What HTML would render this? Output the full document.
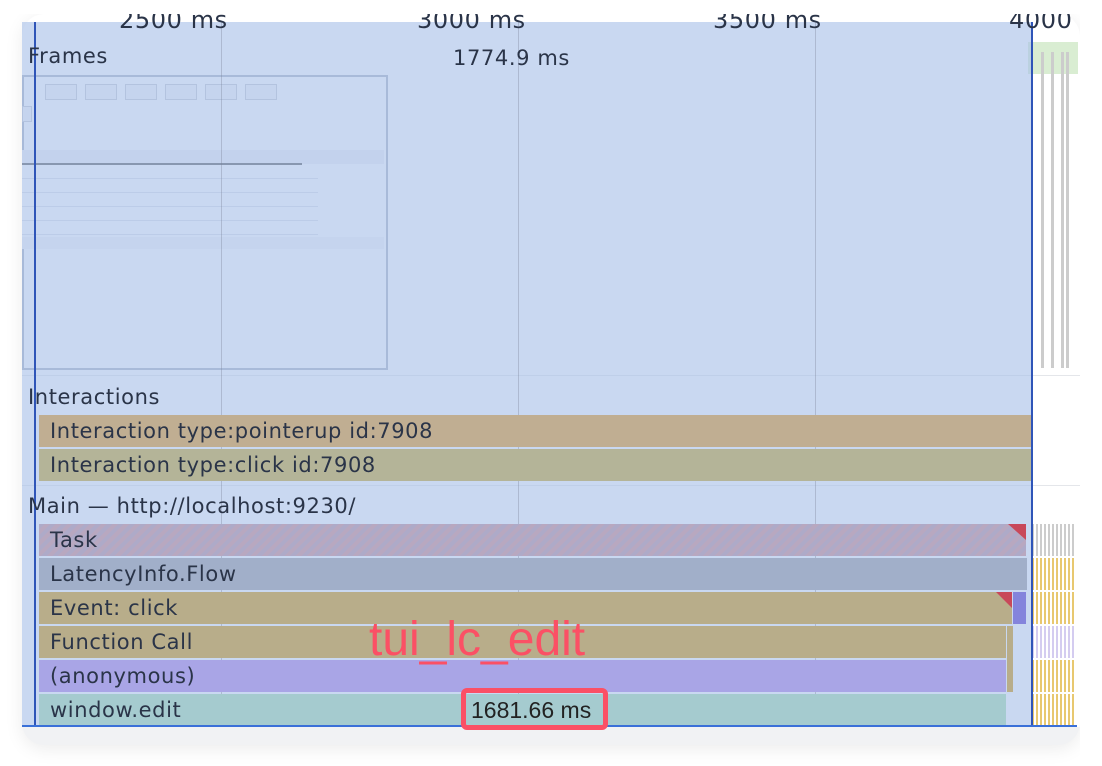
<!DOCTYPE html>
<html><head><meta charset="utf-8"><style>
*{margin:0;padding:0;box-sizing:border-box}
body{width:1102px;height:766px;background:#fff;position:relative;overflow:hidden;font-family:"DejaVu Sans","Noto Sans CJK SC",sans-serif;color:#2a3448}
.card{position:absolute;left:22px;top:14px;width:1058px;height:731px;border-radius:22px;background:#f1f2f4;box-shadow:0 4px 18px rgba(0,0,0,.08);overflow:hidden}
.inner{position:absolute;left:0;top:0;width:1058px;height:713px;background:#fff}
.a{position:absolute}
.t{position:absolute;font-size:21px;letter-spacing:.6px;white-space:nowrap}
.bar{position:absolute;height:32px;font-size:21px;letter-spacing:.6px;line-height:32px;padding-left:11px;white-space:nowrap}
.v{position:absolute;top:22px;width:1px;height:704px;background:rgba(120,130,150,.35)}
.btn{position:absolute;top:84px;width:32px;height:16px;border:1px solid #c4c8d0;background:#f4f5f7}
</style></head><body>
<div class="card"><div class="inner"></div></div>
<div class="a" style="left:1028px;top:42px;width:50px;height:32px;background:#d9edd2"></div>
<div class="a" style="left:1041px;top:52px;width:3px;height:316px;background:#ccc"></div>
<div class="a" style="left:1051px;top:52px;width:3px;height:316px;background:#ccc"></div>
<div class="a" style="left:1061px;top:52px;width:3px;height:316px;background:#ccc"></div>
<div class="a" style="left:1066px;top:52px;width:3px;height:316px;background:#ccc"></div>
<div class="a" style="left:22px;top:375px;width:1058px;height:1px;background:#e4e6ea"></div>
<div class="a" style="left:22px;top:485px;width:1058px;height:1px;background:#e4e6ea"></div>
<div class="a" style="left:1032px;top:524px;width:44px;height:32px;background:repeating-linear-gradient(90deg,#ccc 0 2px,#fff 2px 4px)"></div>
<div class="a" style="left:1032px;top:558px;width:44px;height:32px;background:repeating-linear-gradient(90deg,#e8c870 0 2px,#fff 2px 4px)"></div>
<div class="a" style="left:1032px;top:592px;width:44px;height:32px;background:repeating-linear-gradient(90deg,#e8c870 0 2px,#fff 2px 4px)"></div>
<div class="a" style="left:1032px;top:626px;width:44px;height:32px;background:repeating-linear-gradient(90deg,#d4ccf0 0 2px,#fff 2px 4px)"></div>
<div class="a" style="left:1032px;top:660px;width:44px;height:32px;background:repeating-linear-gradient(90deg,#e8c870 0 2px,#fff 2px 4px)"></div>
<div class="a" style="left:1032px;top:694px;width:44px;height:32px;background:repeating-linear-gradient(90deg,#e8c870 0 2px,#fff 2px 4px)"></div>
<!-- thumbnail -->
<div class="a" style="left:22px;top:75px;width:366px;height:295px;border:2px solid #a8b0c0;background:#fff"></div>
<div class="btn" style="left:45px"></div><div class="btn" style="left:85px"></div><div class="btn" style="left:125px"></div><div class="btn" style="left:165px"></div><div class="btn" style="left:205px"></div><div class="btn" style="left:245px"></div>
<div class="btn" style="left:22px;top:106px;width:10px"></div>
<div class="a" style="left:22px;top:150px;width:362px;height:14px;background:#eef0f3"></div>
<div class="a" style="left:22px;top:163px;width:280px;height:2px;background:#555"></div>
<div class="a" style="left:22px;top:165px;width:296px;height:72px;background:repeating-linear-gradient(180deg,#fff 0 13px,#dcdfe6 13px 14px)"></div>
<div class="a" style="left:22px;top:237px;width:362px;height:12px;background:#f3f4f6"></div>
<!-- overlay -->
<div class="a" style="left:22px;top:22px;width:1010px;height:704px;background:rgba(168,192,232,.62)"></div>
<div class="v" style="left:221px"></div><div class="v" style="left:518px"></div><div class="v" style="left:815px"></div>
<div class="bar" style="left:39px;top:415px;width:993px;background:#c0ae92">Interaction type:pointerup id:7908</div>
<div class="bar" style="left:39px;top:449px;width:993px;background:#b4b498">Interaction type:click id:7908</div>
<div class="bar" style="left:39px;top:524px;width:987px;background:repeating-linear-gradient(135deg,#aeaac8 0 4px,#b8a8c0 4px 8px)">Task</div>
<div class="a" style="left:1008px;top:524px;width:0;height:0;border-top:16px solid #c8485a;border-left:18px solid transparent"></div>
<div class="bar" style="left:39px;top:558px;width:988px;background:#a1afc9">LatencyInfo.Flow</div>
<div class="bar" style="left:39px;top:592px;width:973px;background:#b8ad8a">Event: click</div>
<div class="a" style="left:996px;top:592px;width:0;height:0;border-top:16px solid #c8485a;border-left:16px solid transparent"></div>
<div class="a" style="left:1013px;top:592px;width:13px;height:32px;background:#8484dc"></div>
<div class="bar" style="left:39px;top:626px;width:967px;background:#b8ad8a">Function Call</div>
<div class="bar" style="left:39px;top:660px;width:967px;background:#a9a5e6">(anonymous)</div>
<div class="bar" style="left:39px;top:694px;width:967px;background:#a5cbcf">window.edit</div>
<div class="a" style="left:1007px;top:626px;width:6px;height:66px;background:#b8ad8a"></div>
<div class="a" style="left:34px;top:22px;width:2px;height:704px;background:#2f55b8"></div>
<div class="a" style="left:1031px;top:22px;width:2px;height:704px;background:#2f55b8"></div>
<div class="a" style="left:22px;top:725px;width:1055px;height:2px;background:#3a70d8"></div>
<div class="t" style="left:119px;top:6px;font-size:24px">2500 ms</div>
<div class="t" style="left:417px;top:6px;font-size:24px">3000 ms</div>
<div class="t" style="left:713px;top:6px;font-size:24px">3500 ms</div>
<div class="t" style="left:1009px;top:6px;font-size:24px">4000 ms</div>
<div class="a" style="left:0;top:0;width:1102px;height:14px;background:#fff"></div>
<div class="a" style="left:1080px;top:0;width:22px;height:766px;background:#fff"></div>
<div class="t" style="left:28px;top:44px">Frames</div>
<div class="t" style="left:453px;top:46px">1774.9 ms</div>
<div class="t" style="left:28px;top:385px">Interactions</div>
<div class="t" style="left:28px;top:494px">Main — http://localhost:9230/</div>
<div class="t" style="left:369px;top:612px;font-size:48px;letter-spacing:0;font-family:'Liberation Sans',sans-serif;color:#fb5065">tui_lc_edit</div>
<div class="a" style="left:461px;top:688px;width:147px;height:42px;border:5px solid #fb5065;border-radius:6px;font-size:23px;line-height:34px;padding-left:5px;color:#222;font-family:'Liberation Sans',sans-serif;white-space:nowrap">1681.66 ms</div>
</body></html>
